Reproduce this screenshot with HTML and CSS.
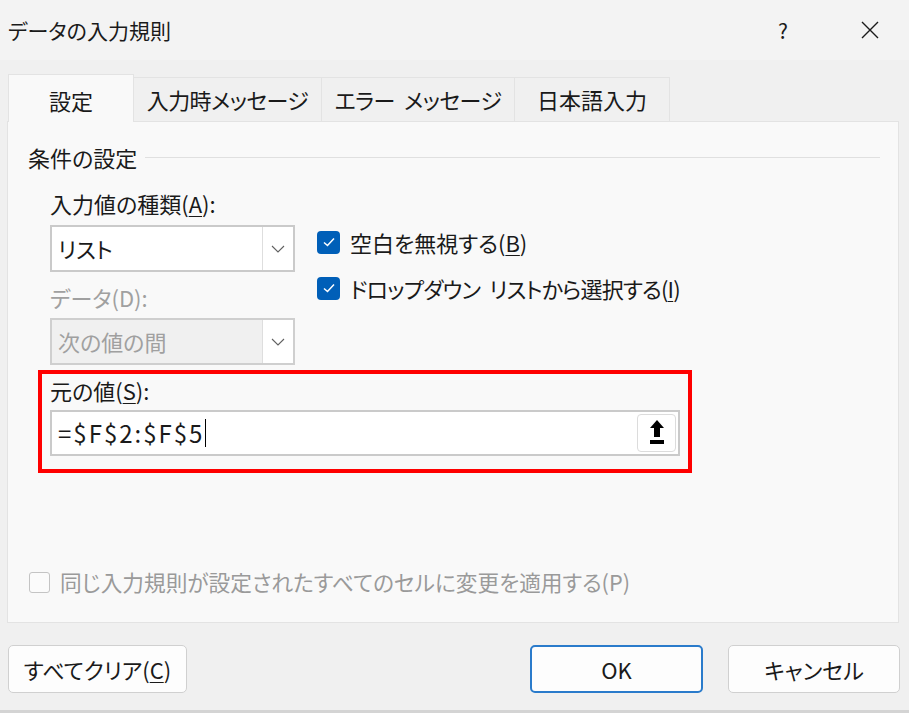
FILE: index.html
```html
<!DOCTYPE html>
<html lang="ja">
<head>
<meta charset="utf-8">
<title>データの入力規則</title>
<link rel="stylesheet" href="styles.css">
</head>
<body>
<div class="dialog">
  <div class="titlebar">
    <div class="title">データの入力規則</div>
    <div class="title-help">?</div>
    <div class="title-close">
      <svg width="20" height="20" viewBox="0 0 20 20"><path d="M2 2 L18 18 M18 2 L2 18" stroke="#1a1a1a" stroke-width="1.4" fill="none"/></svg>
    </div>
  </div>

  <div class="tabs">
    <div class="tab tab-active tab-w1">設定</div>
    <div class="tab tab-w2">入力時メッセージ</div>
    <div class="tab tab-w3">エラー メッセージ</div>
    <div class="tab tab-w4">日本語入力</div>
  </div>

  <div class="panel">
    <div class="group-head">
      <span class="group-title">条件の設定</span>
      <span class="group-line"></span>
    </div>

    <div class="form">
      <div class="col-left">
        <div class="label label-first">入力値の種類(<u>A</u>):</div>
        <div class="combo">
          <div class="combo-text">リスト</div>
          <div class="combo-btn">
            <svg width="14" height="8" viewBox="0 0 14 8"><polyline points="1,1 7,7 13,1" fill="none" stroke="#606060" stroke-width="1.1"/></svg>
          </div>
        </div>
        <div class="label label-second label-disabled">データ(D):</div>
        <div class="combo combo-disabled">
          <div class="combo-text">次の値の間</div>
          <div class="combo-btn">
            <svg width="14" height="8" viewBox="0 0 14 8"><polyline points="1,1 7,7 13,1" fill="none" stroke="#606060" stroke-width="1.1"/></svg>
          </div>
        </div>
      </div>
      <div class="col-right">
        <div class="check-row">
          <span class="check check-on">
            <svg width="14" height="12" viewBox="0 0 14 12"><polyline points="2,6.5 5.5,9.5 12,2.5" fill="none" stroke="#ffffff" stroke-width="1.5"/></svg>
          </span>
          <span class="check-label">空白を無視する(<u>B</u>)</span>
        </div>
        <div class="check-row">
          <span class="check check-on">
            <svg width="14" height="12" viewBox="0 0 14 12"><polyline points="2,6.5 5.5,9.5 12,2.5" fill="none" stroke="#ffffff" stroke-width="1.5"/></svg>
          </span>
          <span class="check-label check-label-narrow">ドロップダウン リストから選択する(<u>I</u>)</span>
        </div>
      </div>
    </div>

    <div class="source-box">
      <div class="label">元の値(<u>S</u>):</div>
      <div class="source-input">
        <div class="source-text">=$F$2:$F$5<span class="caret"></span></div>
        <div class="ref-btn">
          <svg width="16" height="28" viewBox="0 0 16 28"><polygon points="8,1 15,9 11,9 11,18 5,18 5,9 1,9" fill="#000"/><rect x="1" y="21" width="14" height="4" fill="#000"/></svg>
        </div>
      </div>
    </div>

    <div class="apply-row">
      <span class="check check-off"></span>
      <span class="apply-label">同じ入力規則が設定されたすべてのセルに変更を適用する(P)</span>
    </div>
  </div>

  <div class="buttons">
    <div class="btn btn-clear">すべてクリア(<u>C</u>)</div>
    <div class="btn-spacer"></div>
    <div class="btn btn-ok">OK</div>
    <div class="btn btn-cancel">キャンセル</div>
  </div>
</div>
</body>
</html>
```

FILE: styles.css
```css
html, body {
  margin: 0;
  padding: 0;
}
body {
  width: 909px;
  height: 713px;
  overflow: hidden;
  background: #f0f0f0;
  font-family: "Noto Sans CJK JP", "Noto Sans", sans-serif;
  font-feature-settings: "palt";
  color: #1a1a1a;
}
u {
  text-decoration-thickness: 1px;
  text-underline-offset: 3px;
}
.dialog {
  width: 909px;
  height: 713px;
  box-sizing: border-box;
  border-bottom: 3px solid #d4d4d4;
  display: flex;
  flex-direction: column;
}
.titlebar {
  height: 60px;
  display: flex;
  align-items: center;
  background: #f3f3f3;
}
.title {
  flex: 1;
  padding-left: 8px;
  font-size: 21px;
  line-height: 28px;
}
.title-help {
  width: 20px;
  font-size: 21px;
  line-height: 28px;
  text-align: center;
  margin-right: 67px;
}
.title-close {
  width: 20px;
  height: 20px;
  margin-right: 29px;
}
.tabs {
  display: flex;
  align-items: flex-end;
  padding-left: 8px;
  margin-top: 14px;
  height: 47px;
  position: relative;
  z-index: 1;
}
.tab {
  height: 44px;
  box-sizing: border-box;
  border: 1px solid #e3e3e3;
  border-bottom: none;
  border-left: none;
  background: #f0f0f0;
  font-size: 22px;
  line-height: 42px;
  text-align: center;
}
.tab-active {
  height: 48px;
  margin-bottom: -1px;
  background: #f9f9f9;
  border-left: 1px solid #e3e3e3;
  line-height: 50px;
}
.tab-w1 { width: 126px; }
.tab-w2 { width: 188px; letter-spacing: -0.6px; }
.tab-w3 { width: 193px; letter-spacing: -0.6px; word-spacing: 5px; }
.tab-w4 { width: 155px; }
.panel {
  margin-left: 7px;
  width: 892px;
  height: 502px;
  box-sizing: border-box;
  border: 1px solid #e3e3e3;
  background: #f9f9f9;
  padding: 20px 18px 0 20px;
}
.group-head {
  display: flex;
  align-items: center;
  height: 30px;
}
.group-title {
  font-size: 22px;
  line-height: 30px;
}
.group-line {
  flex: 1;
  height: 1px;
  background: #e0e0e0;
  margin-left: 8px;
}
.form {
  display: flex;
  padding-left: 22px;
}
.col-left {
  width: 245px;
  display: flex;
  flex-direction: column;
}
.label {
  font-size: 22px;
  line-height: 30px;
}
.label-first {
  margin-top: 16px;
  margin-bottom: 7px;
}
.label-second {
  margin-top: 10px;
  margin-bottom: 6px;
}
.label-disabled {
  color: #a0a0a0;
}
.combo {
  height: 47px;
  box-sizing: border-box;
  border: 2px solid #cacaca;
  background: #ffffff;
  display: flex;
}
.combo-text {
  flex: 1;
  font-size: 22px;
  line-height: 43px;
  padding-left: 6px;
}
.combo-btn {
  width: 30px;
  border-left: 1px solid #dedede;
  background: #ffffff;
  display: flex;
  align-items: center;
  justify-content: center;
}
.combo-disabled {
  background: #f0f0f0;
  border-color: #cfcfcf;
}
.combo-disabled .combo-text {
  color: #a0a0a0;
}
.col-right {
  margin-left: 22px;
  padding-top: 58px;
  display: flex;
  flex-direction: column;
  gap: 22px;
}
.check-row {
  display: flex;
  align-items: center;
  height: 24px;
}
.check {
  width: 23px;
  height: 23px;
  box-sizing: border-box;
  border-radius: 4px;
  display: flex;
  align-items: center;
  justify-content: center;
  flex: none;
}
.check-on {
  background: #005fb8;
}
.check-off {
  width: 21px;
  height: 21px;
  border: 1px solid #c4c4c4;
  background: #fbfbfb;
  border-radius: 3px;
}
.check-label {
  font-size: 22px;
  line-height: 30px;
  margin-left: 10px;
}
.check-label-narrow {
  letter-spacing: -0.8px;
  word-spacing: 5px;
}
.source-box {
  margin-top: 5px;
  margin-left: 10px;
  width: 654px;
  height: 103px;
  box-sizing: border-box;
  border: 4px solid #ff0000;
  padding: 1px 8px 0 8px;
}
.source-box .label {
  margin-bottom: 5px;
}
.source-input {
  height: 46px;
  box-sizing: border-box;
  border: 2px solid #cacaca;
  background: #ffffff;
  display: flex;
  align-items: center;
  padding-right: 2px;
}
.source-text {
  flex: 1;
  font-size: 24px;
  line-height: 42px;
  padding-left: 6px;
  letter-spacing: 2px;
  display: flex;
  align-items: center;
}
.caret {
  display: inline-block;
  width: 1px;
  height: 28px;
  background: #000;
  margin-left: 1px;
}
.ref-btn {
  width: 39px;
  height: 38px;
  box-sizing: border-box;
  border: 1px solid #dcdcdc;
  border-radius: 4px;
  background: #ffffff;
  display: flex;
  align-items: center;
  justify-content: center;
}
.apply-row {
  display: flex;
  align-items: center;
  margin-top: 94px;
  margin-left: 1px;
  height: 30px;
}
.apply-label {
  font-size: 21.7px;
  line-height: 30px;
  color: #9a9a9a;
  margin-left: 10px;
}
.buttons {
  display: flex;
  margin-top: 22px;
  padding-left: 8px;
  height: 48px;
}
.btn {
  height: 48px;
  box-sizing: border-box;
  border: 1px solid #d0d0d0;
  border-radius: 5px;
  background: #fdfdfd;
  font-size: 22px;
  line-height: 46px;
  text-align: center;
}
.btn-clear {
  width: 179px;
}
.btn-spacer {
  flex: 1;
}
.btn-ok {
  width: 173px;
  border: 2px solid #2a7bcb;
  line-height: 44px;
}
.btn-cancel {
  width: 172px;
  margin-left: 25px;
  margin-right: 9px;
}
```
